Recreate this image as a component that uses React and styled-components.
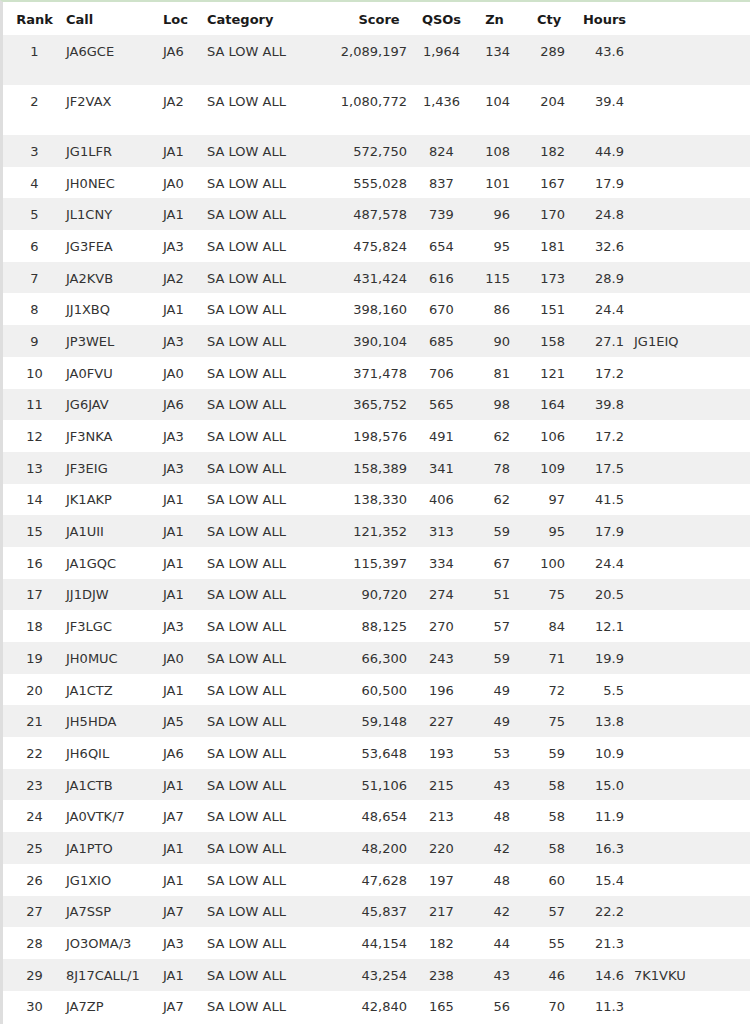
import React from "react";
import styled, { createGlobalStyle } from "styled-components";

const Global = createGlobalStyle`
  html, body { margin: 0; padding: 0; background: #fff; }
  body { font-family: "DejaVu Sans", Verdana, sans-serif; }
`;

const COLS = "63px 97px 44px 134px 74px 53px 50px 55px 59px 1fr";

const Page = styled.div`
  width: 750px;
  min-height: 1024px;
  box-sizing: border-box;
  border-top: 2px solid #cfe2ca;
  border-left: 3px solid #dedede;
  background: #fff;
`;

const HeaderRow = styled.div`
  display: grid;
  grid-template-columns: ${COLS};
  height: 33px;
  align-items: center;
  padding-top: 2px;
  box-sizing: border-box;
  font-size: 13px;
  font-weight: bold;
  color: #1a1a1a;
`;

const Row = styled.div`
  display: grid;
  grid-template-columns: ${COLS};
  height: ${(p) => (p.$tall ? "50px" : "31.69px")};
  align-items: start;
  background: ${(p) => (p.$striped ? "#f0f0f0" : "#fff")};
  font-size: 13px;
  color: #333;
`;

const Cell = styled.div`
  height: 31.69px;
  display: flex;
  align-items: center;
  padding-top: 1px;
  box-sizing: border-box;
  justify-content: ${(p) =>
    p.$align === "right" ? "flex-end" : p.$align === "center" ? "center" : "flex-start"};
  padding-right: ${(p) => (p.$align === "right" ? "8px" : "0")};
  padding-left: ${(p) => p.$pl || "0"};
  white-space: nowrap;
`;

const HeadCell = styled.div`
  display: flex;
  justify-content: ${(p) => (p.$align === "center" ? "center" : "flex-start")};
  padding-left: ${(p) => p.$pl || "0"};
  white-space: nowrap;
`;

const data = [
  [1, "JA6GCE", "JA6", "2,089,197", "1,964", "134", "289", "43.6", ""],
  [2, "JF2VAX", "JA2", "1,080,772", "1,436", "104", "204", "39.4", ""],
  [3, "JG1LFR", "JA1", "572,750", "824", "108", "182", "44.9", ""],
  [4, "JH0NEC", "JA0", "555,028", "837", "101", "167", "17.9", ""],
  [5, "JL1CNY", "JA1", "487,578", "739", "96", "170", "24.8", ""],
  [6, "JG3FEA", "JA3", "475,824", "654", "95", "181", "32.6", ""],
  [7, "JA2KVB", "JA2", "431,424", "616", "115", "173", "28.9", ""],
  [8, "JJ1XBQ", "JA1", "398,160", "670", "86", "151", "24.4", ""],
  [9, "JP3WEL", "JA3", "390,104", "685", "90", "158", "27.1", "JG1EIQ"],
  [10, "JA0FVU", "JA0", "371,478", "706", "81", "121", "17.2", ""],
  [11, "JG6JAV", "JA6", "365,752", "565", "98", "164", "39.8", ""],
  [12, "JF3NKA", "JA3", "198,576", "491", "62", "106", "17.2", ""],
  [13, "JF3EIG", "JA3", "158,389", "341", "78", "109", "17.5", ""],
  [14, "JK1AKP", "JA1", "138,330", "406", "62", "97", "41.5", ""],
  [15, "JA1UII", "JA1", "121,352", "313", "59", "95", "17.9", ""],
  [16, "JA1GQC", "JA1", "115,397", "334", "67", "100", "24.4", ""],
  [17, "JJ1DJW", "JA1", "90,720", "274", "51", "75", "20.5", ""],
  [18, "JF3LGC", "JA3", "88,125", "270", "57", "84", "12.1", ""],
  [19, "JH0MUC", "JA0", "66,300", "243", "59", "71", "19.9", ""],
  [20, "JA1CTZ", "JA1", "60,500", "196", "49", "72", "5.5", ""],
  [21, "JH5HDA", "JA5", "59,148", "227", "49", "75", "13.8", ""],
  [22, "JH6QIL", "JA6", "53,648", "193", "53", "59", "10.9", ""],
  [23, "JA1CTB", "JA1", "51,106", "215", "43", "58", "15.0", ""],
  [24, "JA0VTK/7", "JA7", "48,654", "213", "48", "58", "11.9", ""],
  [25, "JA1PTO", "JA1", "48,200", "220", "42", "58", "16.3", ""],
  [26, "JG1XIO", "JA1", "47,628", "197", "48", "60", "15.4", ""],
  [27, "JA7SSP", "JA7", "45,837", "217", "42", "57", "22.2", ""],
  [28, "JO3OMA/3", "JA3", "44,154", "182", "44", "55", "21.3", ""],
  [29, "8J17CALL/1", "JA1", "43,254", "238", "43", "46", "14.6", "7K1VKU"],
  [30, "JA7ZP", "JA7", "42,840", "165", "56", "70", "11.3", ""],
];

export default function App() {
  return (
    <Page>
      <Global />
      <HeaderRow>
        <HeadCell $align="center">Rank</HeadCell>
        <HeadCell>Call</HeadCell>
        <HeadCell>Loc</HeadCell>
        <HeadCell>Category</HeadCell>
        <HeadCell $align="center" $pl="2px">Score</HeadCell>
        <HeadCell $align="center">QSOs</HeadCell>
        <HeadCell $align="center" $pl="3px">Zn</HeadCell>
        <HeadCell $align="center" $pl="7px">Cty</HeadCell>
        <HeadCell $align="center" $pl="4px">Hours</HeadCell>
        <HeadCell />
      </HeaderRow>
      {data.map(([rank, call, loc, score, qsos, zn, cty, hours, op]) => (
        <Row key={rank} $striped={rank % 2 === 1} $tall={rank <= 2}>
          <Cell $align="center">{rank}</Cell>
          <Cell>{call}</Cell>
          <Cell>{loc}</Cell>
          <Cell>SA LOW ALL</Cell>
          <Cell $align="right">{score}</Cell>
          <Cell $align="center">{qsos}</Cell>
          <Cell $align="right">{zn}</Cell>
          <Cell $align="right">{cty}</Cell>
          <Cell $align="right">{hours}</Cell>
          <Cell $pl="2px">{op}</Cell>
        </Row>
      ))}
    </Page>
  );
}
